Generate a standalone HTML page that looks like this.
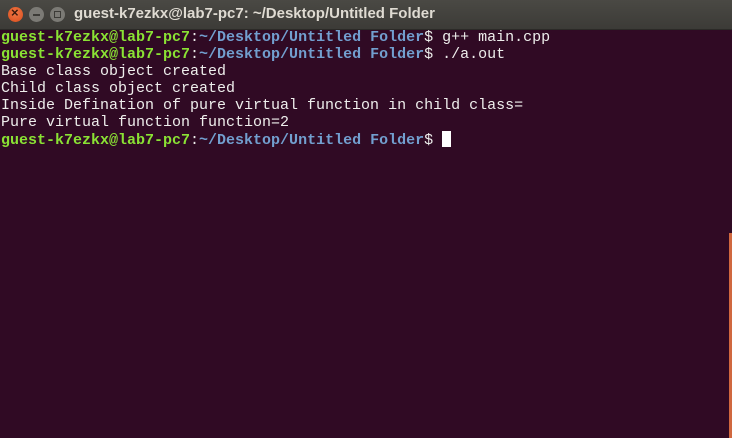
<!DOCTYPE html>
<html><head><style>
html,body{margin:0;padding:0;width:732px;height:438px;overflow:hidden;background:#300a24}
.tb{position:absolute;left:0;top:0;width:732px;height:29px;background:linear-gradient(#4a4944,#3c3b37);border-bottom:1px solid #2b2a27}
.btn{position:absolute;top:7px;width:15px;height:15px;border-radius:50%}
.t{position:absolute;left:74px;top:5px;color:#dfdbd2;font:bold 15px "Liberation Sans",sans-serif}
pre{position:absolute;left:1px;top:29px;margin:0;font:15px/17px "Liberation Mono",monospace;color:#eeeeec}
.g{color:#8ae234;font-weight:bold}.b{color:#729fcf;font-weight:bold}
.cur{display:inline-block;width:9px;height:16px;background:#fff;vertical-align:-3px}
.sb{position:absolute;left:729px;top:233px;width:3px;height:205px;background:#d0683f}
</style></head><body>
<div class="tb">
<div class="btn" style="left:8px;background:radial-gradient(circle at 50% 40%,#f07746,#d94e1c);"><span style="position:absolute;left:3px;top:-2px;color:#3a1a0c;font:bold 13px 'Liberation Sans',sans-serif">×</span></div>
<div class="btn" style="left:29px;background:#7b7a75;border:0"><div style="position:absolute;left:4px;top:7px;width:7px;height:2px;background:#3c3b37"></div></div>
<div class="btn" style="left:50px;background:#7b7a75"><div style="position:absolute;left:4px;top:4px;width:5px;height:5px;border:1px solid #3c3b37"></div></div>
<div class="t">guest-k7ezkx@lab7-pc7: ~/Desktop/Untitled Folder</div>
</div>
<pre><span class="g">guest-k7ezkx@lab7-pc7</span>:<span class="b">~/Desktop/Untitled Folder</span>$ g++ main.cpp
<span class="g">guest-k7ezkx@lab7-pc7</span>:<span class="b">~/Desktop/Untitled Folder</span>$ ./a.out
Base class object created
Child class object created
Inside Defination of pure virtual function in child class=
Pure virtual function function=2
<span class="g">guest-k7ezkx@lab7-pc7</span>:<span class="b">~/Desktop/Untitled Folder</span>$ <span class="cur"></span></pre>
<div class="sb"></div>
</body></html>
